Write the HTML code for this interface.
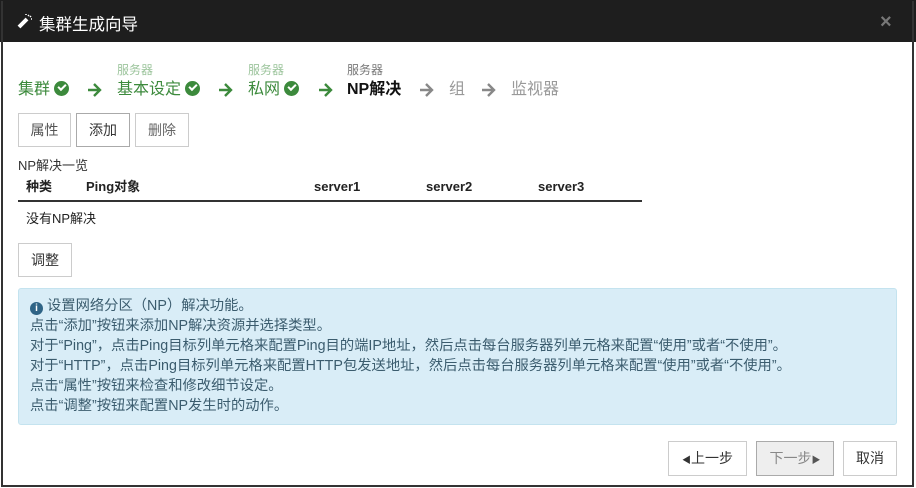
<!DOCTYPE html>
<html><head><meta charset="utf-8"><style>
*{box-sizing:border-box;margin:0;padding:0}
body{width:916px;height:488px;background:#fff;font-family:"Liberation Sans","Noto Sans CJK SC",sans-serif;position:relative;overflow:hidden}
.frame{position:absolute;left:1px;top:1px;width:913px;height:486px;border:2px solid #333;border-top:none}
.hdr{position:absolute;left:0;top:0;width:916px;height:42px;background:#1e1e1e;color:#fff;font-size:16px}
.abs{position:absolute;white-space:nowrap}
.btn{position:absolute;border:1px solid #ccc;background:#fff;font-size:14px;color:#333;text-align:center}
.sub{font-size:12px;color:#9cc49c}
.main{font-size:16px;color:#3c8a3c;line-height:20px}
.chk{display:inline-block;width:15px;height:15px;border-radius:50%;background:#3c8a3c;vertical-align:-2px;position:relative}
.chk:after{content:"";position:absolute;left:4px;top:3px;width:6px;height:3px;border-left:2px solid #fff;border-bottom:2px solid #fff;transform:rotate(-45deg)}
.arr{position:absolute;top:83px}
.info{position:absolute;left:18px;top:288px;width:879px;height:137px;background:#d9edf7;border:1px solid #c4e3ef;border-radius:3px;padding:7px 0 0 11px;font-size:14.3px;line-height:20px;color:#3b5c6e}
.th{font-size:13px;font-weight:bold;color:#222;line-height:16px;top:179px}
</style></head><body>
<div class="hdr">
<svg class="abs" style="left:17px;top:13px" width="16" height="16" viewBox="0 0 16 16"><path d="M2 14 L10 6" stroke="#fff" stroke-width="4"/><path d="M11 2l1 1M14 3l-1 1M9 1v1M14 6h1" stroke="#fff" stroke-width="1.5"/></svg>
<div class="abs" style="left:39px;top:11px;font-size:16.5px">集群生成向导</div>
<div class="abs" style="left:880px;top:11px;font-size:20px;color:#777;font-weight:bold">×</div>
</div>
<div class="frame"></div>
<div class="abs sub" style="left:117px;top:61px">服务器</div>
<div class="abs sub" style="left:248px;top:61px">服务器</div>
<div class="abs sub" style="left:347px;top:61px;color:#777">服务器</div>
<div class="abs main" style="left:18px;top:80px">集群 <span class="chk"></span></div>
<svg class="arr" style="left:87px" width="15" height="14" viewBox="0 0 15 14"><path d="M1 7h12M7 1l6 6-6 6" stroke="#3c8a3c" stroke-width="2.4" fill="none"/></svg>
<div class="abs main" style="left:117px;top:80px">基本设定 <span class="chk"></span></div>
<svg class="arr" style="left:218px" width="15" height="14" viewBox="0 0 15 14"><path d="M1 7h12M7 1l6 6-6 6" stroke="#3c8a3c" stroke-width="2.4" fill="none"/></svg>
<div class="abs main" style="left:248px;top:80px">私网 <span class="chk"></span></div>
<svg class="arr" style="left:318px" width="15" height="14" viewBox="0 0 15 14"><path d="M1 7h12M7 1l6 6-6 6" stroke="#3c8a3c" stroke-width="2.4" fill="none"/></svg>
<div class="abs main" style="left:347px;top:80px;color:#111;font-weight:bold">NP解决</div>
<svg class="arr" style="left:419px" width="15" height="14" viewBox="0 0 15 14"><path d="M1 7h12M7 1l6 6-6 6" stroke="#888" stroke-width="2.4" fill="none"/></svg>
<div class="abs main" style="left:449px;top:80px;color:#999">组</div>
<svg class="arr" style="left:481px" width="15" height="14" viewBox="0 0 15 14"><path d="M1 7h12M7 1l6 6-6 6" stroke="#888" stroke-width="2.4" fill="none"/></svg>
<div class="abs main" style="left:511px;top:80px;color:#999">监视器</div>
<div class="btn" style="left:18px;top:113px;width:53px;height:34px;line-height:32px;color:#555">属性</div>
<div class="btn" style="left:76px;top:113px;width:54px;height:34px;line-height:32px;border-color:#aaa">添加</div>
<div class="btn" style="left:135px;top:113px;width:54px;height:34px;line-height:32px;color:#666">删除</div>
<div class="abs" style="left:18px;top:155px;font-size:13px;color:#333">NP解决一览</div>
<div class="abs th" style="left:26px">种类</div>
<div class="abs th" style="left:86px">Ping对象</div>
<div class="abs th" style="left:314px">server1</div>
<div class="abs th" style="left:426px">server2</div>
<div class="abs th" style="left:538px">server3</div>
<div class="abs" style="left:18px;top:200px;width:624px;height:2px;background:#333"></div>
<div class="abs" style="left:26px;top:208px;font-size:13px;color:#222">没有NP解决</div>
<div class="btn" style="left:18px;top:243px;width:54px;height:34px;line-height:32px">调整</div>
<div class="info">
<div><span style="display:inline-block;width:13px;height:13px;border-radius:50%;background:#2f6486;color:#fff;font-size:10px;line-height:13px;text-align:center;font-weight:bold;vertical-align:-1px">i</span> 设置网络分区（NP）解决功能。</div>
<div>点击“添加”按钮来添加NP解决资源并选择类型。</div>
<div>对于“Ping”，点击Ping目标列单元格来配置Ping目的端IP地址，然后点击每台服务器列单元格来配置“使用”或者“不使用”。</div>
<div>对于“HTTP”，点击Ping目标列单元格来配置HTTP包发送地址，然后点击每台服务器列单元格来配置“使用”或者“不使用”。</div>
<div>点击“属性”按钮来检查和修改细节设定。</div>
<div>点击“调整”按钮来配置NP发生时的动作。</div>
</div>
<div class="btn" style="left:668px;top:441px;width:79px;height:35px;line-height:33px"><span style="font-size:9px">◀</span>上一步</div>
<div class="btn" style="left:756px;top:441px;width:78px;height:35px;line-height:33px;background:#eee;border-color:#aaa;color:#888">下一步<span style="font-size:9px;color:#555">▶</span></div>
<div class="btn" style="left:843px;top:441px;width:54px;height:35px;line-height:33px">取消</div>
</body></html>
